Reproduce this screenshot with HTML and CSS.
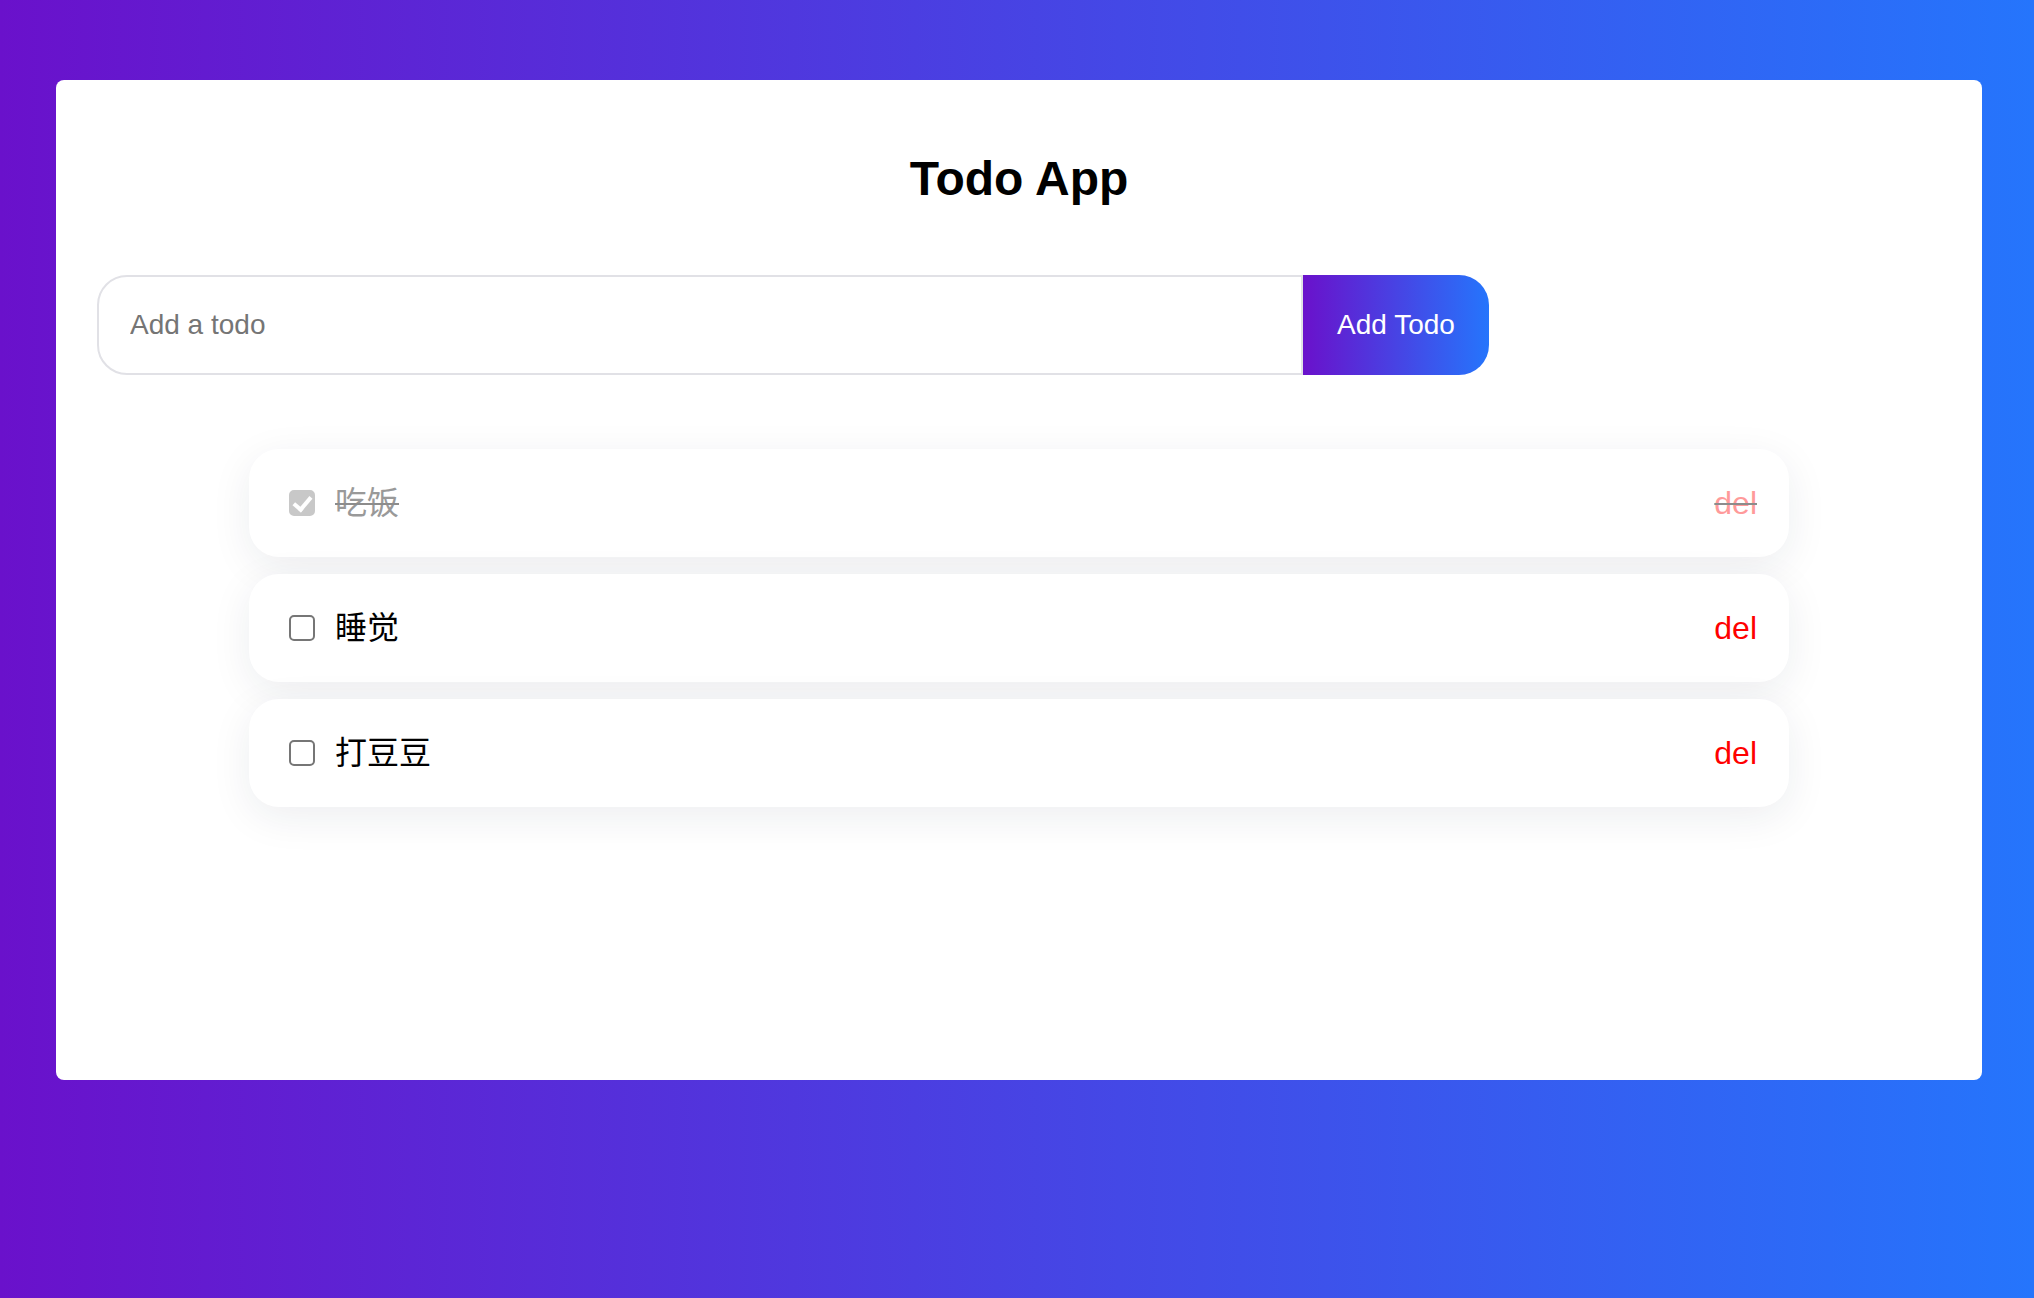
FILE: index.html
```html
<!DOCTYPE html>
<html lang="zh">
<head>
<meta charset="utf-8">
<title>Todo App</title>
<link rel="stylesheet" href="styles.css">
</head>
<body>
<div class="page">
  <div class="card">
    <h1 class="title">Todo App</h1>
    <form class="add-form">
      <input class="add-input" type="text" placeholder="Add a todo">
      <button class="add-btn" type="button">Add Todo</button>
    </form>
    <ul class="todo-list">
      <li class="todo-item done">
        <input class="check" type="checkbox" checked>
        <span class="todo-text">吃饭</span>
        <span class="del">del</span>
      </li>
      <li class="todo-item">
        <input class="check" type="checkbox">
        <span class="todo-text">睡觉</span>
        <span class="del">del</span>
      </li>
      <li class="todo-item">
        <input class="check" type="checkbox">
        <span class="todo-text">打豆豆</span>
        <span class="del">del</span>
      </li>
    </ul>
  </div>
</div>
</body>
</html>
```

FILE: styles.css
```css
* { box-sizing: border-box; }

html, body {
  margin: 0;
  padding: 0;
}

body {
  width: 2034px;
  height: 1298px;
  overflow: hidden;
  background: linear-gradient(to right, #6a11cb, #2575fc);
  font-family: "Liberation Sans", "Noto Sans CJK SC", sans-serif;
  color: #000;
}

.page {
  padding: 80px 52px 0 56px;
}

.card {
  height: 1000px;
  background: #fff;
  border-radius: 8px;
  padding: 40px 41px;
}

.title {
  margin: 31px 0 69px;
  font-size: 48px;
  line-height: 55px;
  font-weight: 700;
  text-align: center;
}

.add-form {
  display: flex;
  margin: 0;
}

.add-input {
  width: 1206px;
  height: 100px;
  border: 2px solid #e1e1e6;
  border-radius: 30px 0 0 30px;
  padding: 0 31px;
  font-family: inherit;
  font-size: 28px;
  color: #333;
  outline: none;
  background: #fff;
}

.add-input::placeholder {
  color: #757575;
}

.add-btn {
  width: 186px;
  height: 100px;
  border: none;
  border-radius: 0 30px 30px 0;
  background: linear-gradient(to right, #6a11cb, #2575fc);
  color: #fff;
  font-family: inherit;
  font-size: 28px;
  padding: 0;
  cursor: pointer;
}

.todo-list {
  list-style: none;
  margin: 74px auto 0;
  padding: 0;
  width: 1540px;
  display: flex;
  flex-direction: column;
  gap: 17px;
}

.todo-item {
  display: flex;
  align-items: center;
  height: 108px;
  padding: 0 32px 0 40px;
  background: #fff;
  border-radius: 30px;
  box-shadow: 0 10px 40px rgba(30, 40, 60, 0.08);
  font-size: 32px;
}

.check {
  appearance: none;
  -webkit-appearance: none;
  width: 26px;
  height: 26px;
  margin: 0 20px 0 0;
  border: 2px solid #767676;
  border-radius: 5px;
  background: #fff;
  position: relative;
  flex: none;
}

.check:checked {
  background: #777;
  border-color: #777;
}

.check:checked::after {
  content: "";
  position: absolute;
  left: 6px;
  top: 1px;
  width: 7px;
  height: 14px;
  border-right: 4px solid #fff;
  border-bottom: 4px solid #fff;
  transform: rotate(40deg);
}

.todo-text {
  flex: 1;
  line-height: 1;
}

.del {
  color: #ff0000;
  line-height: 1;
  cursor: pointer;
}

.todo-item.done {
  color: #999;
  text-decoration: line-through;
  text-decoration-color: #8c8c8c;
  text-decoration-thickness: 2px;
}

.todo-item.done .check {
  opacity: 0.4;
}

.todo-item.done .del {
  color: #ff9a9a;
}
```
